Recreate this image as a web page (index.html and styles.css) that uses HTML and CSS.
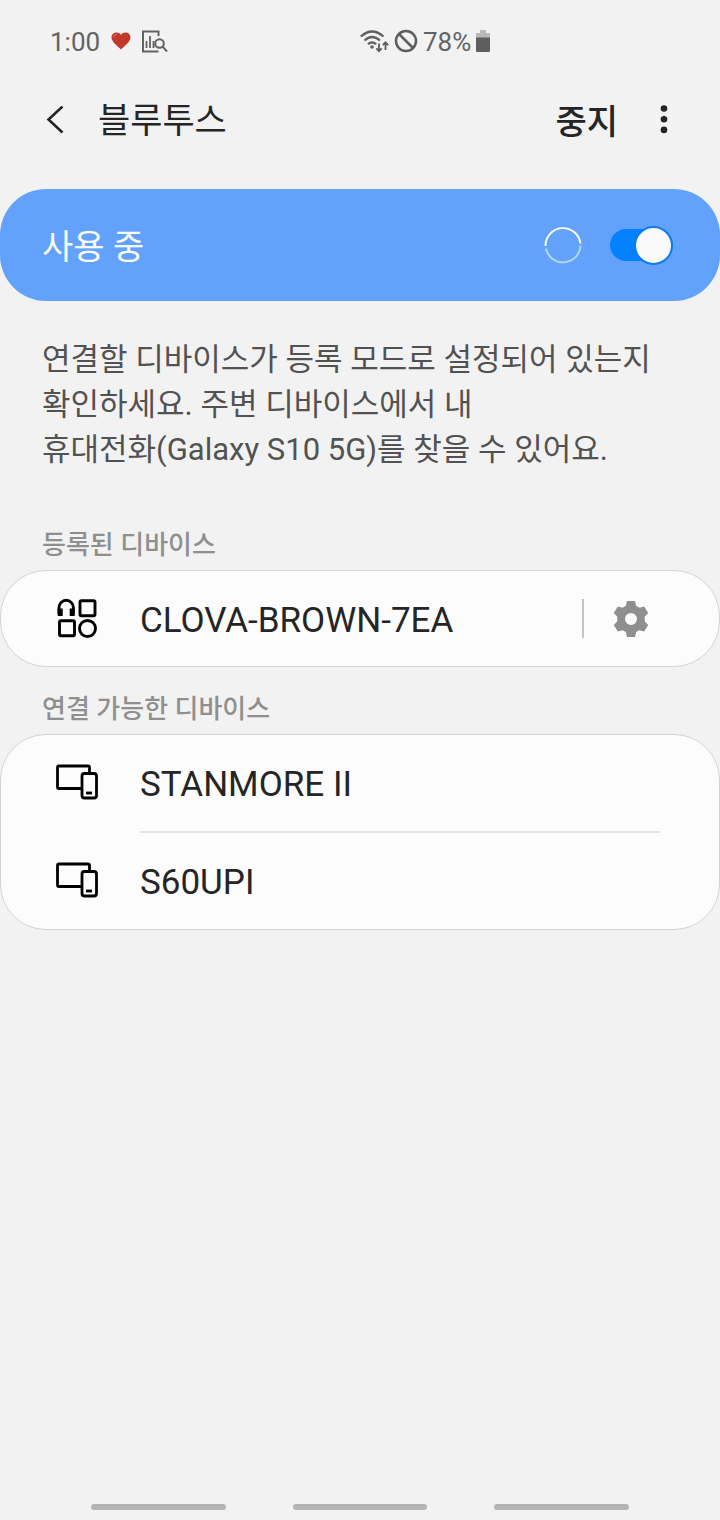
FILE: index.html
```html
<!DOCTYPE html>
<html lang="ko">
<head>
<meta charset="utf-8">
<meta name="viewport" content="width=device-width">
<title>블루투스</title>
<link rel="stylesheet" href="styles.css">
</head>
<body>
<div class="screen">
  <div class="status">
    <div class="status-left">
      <span class="time">1:00</span>
      <svg width="20" height="18" viewBox="0 0 20 18"><path d="M10 17.500C7 14.500.5 10 .5 5.500C.5 0 7.500-1 10 3C12.500-1 19.500 0 19.500 5.500C19.500 10 13 14.500 10 17.500Z" fill="#c0392b"/><path d="M2.500 5Q3 2.500 5.500 2.500" stroke="#e07a6c" fill="none"/></svg>
      <svg width="26" height="23" viewBox="0 0 26 23" fill="none" stroke="#636363" stroke-width="2"><path d="M16.500 6V1.500H1V21.500H16.500"/><path d="M4.500 11V18M8 6V18M11.500 11V18" stroke-width="1.800"/><circle cx="17.500" cy="13.500" r="4.300"/><path d="M20.700 16.700L25 21.500"/></svg>
    </div>
    <div class="status-right">
      <svg width="29" height="23" viewBox="0 0 29 23" fill="none" stroke="#5e5e5e" stroke-width="2.200"><path d="M.8 6.500Q12-3.500 23.500 6.500M4.500 10.500Q12 3.500 20 10.500M8 14.300Q12 10.500 16.200 14.300"/><circle cx="12" cy="17" r="1.800" fill="#5e5e5e" stroke="none"/><path d="M19 13.500V21M16.300 18.300L19 21.200L21.700 18.300M25.500 20V12.500M22.800 15.200L25.500 12.300L28.200 15.200" stroke-width="1.800"/></svg>
      <svg width="24" height="24" viewBox="0 0 24 24" fill="none" stroke="#5e5e5e" stroke-width="2.500"><circle cx="12" cy="12" r="10"/><path d="M5 5L19 19"/></svg>
      <span class="charge">78%</span>
      <svg width="14" height="22" viewBox="0 0 14 22"><path d="M4 0H10V3H14V8H0V3H4Z" fill="#b9b9b9"/><path d="M0 7.500H14V21Q14 22 13 22H1Q0 22 0 21Z" fill="#5e5e5e"/></svg>
    </div>
  </div>

  <header class="appbar">
    <button class="plain back" aria-label="뒤로"><svg width="18" height="28" viewBox="0 0 18 28" fill="none" stroke="#252525" stroke-width="2.600"><path d="M16.500 .5L2.500 13.500L16.500 26.500"/></svg></button>
    <h1 class="title">블루투스</h1>
    <button class="plain stop">중지</button>
    <button class="plain more" aria-label="더보기"><svg width="8" height="30" viewBox="0 0 8 30" fill="#252525"><circle cx="4" cy="3.500" r="3.300"/><circle cx="4" cy="14.200" r="3.300"/><circle cx="4" cy="24.900" r="3.300"/></svg></button>
  </header>

  <main>
    <div class="power">
      <label class="power-label" for="bluetooth">사용 중</label>
      <svg width="38" height="38" viewBox="0 0 38 38" fill="none" stroke-width="1.900"><path d="M1.530 20A17.500 17.500 0 0 1 36.400 17.500" stroke="#fff"/><path d="M36.500 19.500A17.500 17.500 0 0 1 1.900 22.500" stroke="#b4d9fc"/></svg>
      <input class="switch" type="checkbox" role="switch" id="bluetooth" checked>
    </div>
    <p class="hint">연결할 디바이스가 등록 모드로 설정되어 있는지 확인하세요. 주변 디바이스에서 내 <span class="phrase">휴대전화(Galaxy S10 5G)를</span> 찾을 수 있어요.</p>

    <h2 class="section">등록된 디바이스</h2>
    <ul class="list">
      <li class="row">
        <button class="plain device">
          <svg width="44" height="42" viewBox="0 0 44 42" fill="none" stroke="#000" stroke-width="2.900"><path d="M5 16V9.500A7.200 7.200 0 0 1 19.400 9.500V16"/><path d="M6.200 10.500V18M18.200 10.500V18" stroke-width="5"/><rect x="26" y="2.700" width="15" height="15" rx="1.500"/><rect x="5.500" y="22.700" width="15" height="15" rx="1.500"/><circle cx="33.500" cy="30.500" r="8"/></svg>
          <span>CLOVA-BROWN-7EA</span>
        </button>
        <button class="plain settings" aria-label="설정"><svg width="36" height="36" viewBox="0 0 36 36"><path fill="#8f8f8f" fill-rule="evenodd" d="M14 0H22L23.200 5.100Q25.200 5.900 26.400 6.800L31.200 5.400L35.200 12.100L31.700 15.800V20.200L35.200 23.900L31.200 30.600L26.400 29.200Q25.200 30.100 23.200 30.900L22 36H14L12.800 30.900Q10.800 30.100 9.600 29.200L4.800 30.600L.8 23.900L4.300 20.200V15.800L.8 12.100L4.800 5.400L9.600 6.800Q10.800 5.900 12.800 5.100ZM18 12A6 6 0 1 0 18 24A6 6 0 1 0 18 12Z"/></svg></button>
      </li>
    </ul>

    <h2 class="section">연결 가능한 디바이스</h2>
    <ul class="list">
      <li class="row">
        <button class="plain device">
          <svg width="44" height="42" viewBox="0 0 44 42" fill="none" stroke="#000" stroke-width="2.800"><path d="M28 26.500H5Q3.500 26.500 3.500 25V5.500Q3.500 4 5 4H34Q35.500 4 35.500 5.500V11"/><rect x="28" y="11.500" width="14.500" height="24.500" rx="2.500"/><path d="M32 31H38"/></svg>
          <span>STANMORE II</span>
        </button>
      </li>
      <li class="row">
        <button class="plain device">
          <svg width="44" height="42" viewBox="0 0 44 42" fill="none" stroke="#000" stroke-width="2.800"><path d="M28 26.500H5Q3.500 26.500 3.500 25V5.500Q3.500 4 5 4H34Q35.500 4 35.500 5.500V11"/><rect x="28" y="11.500" width="14.500" height="24.500" rx="2.500"/><path d="M32 31H38"/></svg>
          <span>S60UPI</span>
        </button>
      </li>
    </ul>
  </main>

  <nav class="gestures">
    <button class="plain handle" aria-label="최근 앱"></button>
    <button class="plain handle" aria-label="홈"></button>
    <button class="plain handle" aria-label="뒤로 가기"></button>
  </nav>
</div>
</body>
</html>
```
FILE: styles.css
```css
*,
*::before {
  box-sizing: border-box;
}

body {
  margin: 0;
  background: #f2f2f2;
  color: #252525;
  font-family: Roboto, "Noto Sans CJK KR", sans-serif;
}

svg {
  display: block;
  flex: none;
}

.plain {
  padding: 0;
  border: 0;
  background: none;
  color: inherit;
  font: inherit;
}

.screen {
  display: flex;
  flex-direction: column;
  min-height: 100vh;
}

main {
  flex: 1;
}

.status {
  display: grid;
  grid-template-columns: 1fr 1fr;
  height: 82px;
  color: #636363;
  font-size: 26px;
}

.status-left,
.status-right {
  display: flex;
  align-items: center;
}

.status-left {
  gap: 11px;
  padding-left: 50px;
}

.status-right {
  gap: 5px;
}

.time,
.charge {
  padding-top: 2px;
}

.appbar {
  display: flex;
  align-items: center;
  height: 76px;
  padding: 0 52px 0 46px;
}

.title {
  flex: 1;
  margin: 0 0 0 34px;
  padding-top: 4px;
  font-size: 35px;
  font-weight: 400;
  line-height: 52px;
}

.stop {
  padding-top: 4px;
  font-size: 34px;
  font-weight: 500;
  line-height: 52px;
}

.more {
  margin-left: 42px;
}

.power {
  display: flex;
  align-items: center;
  height: 112px;
  margin-top: 31px;
  padding: 0 47px 0 42px;
  border-radius: 46px;
  background: #62a2fc;
  color: #fafafa;
}

.power-label {
  flex: 1;
  padding-top: 4px;
  font-size: 34px;
  line-height: 52px;
}

.switch {
  appearance: none;
  display: flex;
  align-items: center;
  justify-content: flex-end;
  width: 63px;
  height: 32px;
  margin: 0 0 0 28px;
  border-radius: 16px;
  background: #0381fe;
}

.switch::before {
  content: "";
  flex: none;
  width: 39px;
  height: 39px;
  border: 2px solid #0b7bef;
  border-radius: 50%;
  background: #fafafa;
}

.switch:not(:checked) {
  justify-content: flex-start;
}

.hint {
  margin: 36px 42px 0;
  color: #525252;
  font-size: 31px;
  line-height: 45px;
  word-break: keep-all;
}

.phrase {
  white-space: nowrap;
}

.section {
  margin: 0 42px;
  padding-top: 24px;
  color: #8f8f8f;
  font-size: 26px;
  font-weight: 500;
  line-height: 36px;
}

.hint + .section {
  padding-top: 55px;
}

.list {
  margin: 7px 0 0;
  padding: 0;
  border: 1px solid #d4d4d4;
  border-radius: 46px;
  background: #fcfcfc;
  list-style: none;
}

.row {
  display: flex;
  align-items: center;
  padding-right: 70px;
}

.device {
  display: flex;
  flex: 1;
  align-items: center;
  gap: 42px;
  height: 95px;
  padding-left: 53px;
  font-size: 35px;
  text-align: left;
}

.device span {
  padding-top: 3px;
}

.row + .row {
  flex-wrap: wrap;
  padding-right: 59px;
}

.row + .row::before {
  content: "";
  width: 100%;
  height: 2px;
  margin: 1px 0 0 139px;
  background: #e3e3e3;
}

.row + .row .device {
  height: 96px;
}

.settings {
  height: 39px;
  padding-left: 29px;
  border-left: 2px solid #c4c4c4;
}

.gestures {
  display: grid;
  grid-template-columns: repeat(3, 1fr);
  gap: 67px;
  padding: 0 91px 10px;
}

.handle {
  height: 6px;
  border-radius: 3px;
  background: #b4b4b4;
}
```
